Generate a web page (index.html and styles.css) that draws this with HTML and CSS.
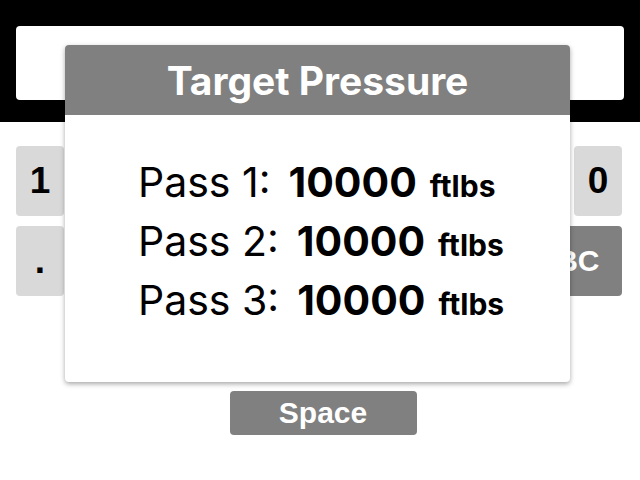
FILE: index.html
```html
<!DOCTYPE html>
<html>
<head>
<meta charset="utf-8">
<link rel="stylesheet" href="styles.css">
</head>
<body>
<div class="screen">
  <div class="topbar">
    <div class="input"></div>
  </div>
  <div class="keyboard">
    <div class="row">
      <div class="key">1</div>
      <div class="spacer"></div>
      <div class="key">0</div>
    </div>
    <div class="row">
      <div class="key">.</div>
      <div class="spacer"></div>
      <div class="key key-dark key-wide">ABC</div>
    </div>
    <div class="row row-center">
      <div class="space">Space</div>
    </div>
  </div>
  <div class="modal">
    <div class="modal-head">Target Pressure</div>
    <div class="modal-body">
      <div class="line"><span class="lbl">Pass 1:</span><span class="val">10000</span><span class="unit">ftlbs</span></div>
      <div class="line"><span class="lbl">Pass 2:</span><span class="val">10000</span><span class="unit">ftlbs</span></div>
      <div class="line"><span class="lbl">Pass 3:</span><span class="val">10000</span><span class="unit">ftlbs</span></div>
    </div>
  </div>
</div>
</body>
</html>
```
FILE: styles.css
```css
html, body {
  margin: 0;
  padding: 0;
  background: #ffffff;
}
.screen {
  position: relative;
  width: 640px;
  height: 480px;
  overflow: hidden;
  font-family: Inter, "Liberation Sans", sans-serif;
}
.topbar {
  background: #000000;
  height: 122px;
  padding: 26px 16px 0;
  box-sizing: border-box;
}
.input {
  background: #ffffff;
  height: 74px;
  border-radius: 4px;
}
.keyboard {
  padding: 24px 18px 0 16px;
  display: flex;
  flex-direction: column;
  gap: 10px;
}
.row {
  display: flex;
  gap: 14px;
  height: 70px;
}
.row-center {
  justify-content: center;
  height: auto;
  margin-top: 85px;
  padding-left: 8px;
}
.spacer {
  flex: 1;
}
.key {
  width: 48px;
  height: 70px;
  background: #d9d9d9;
  border-radius: 4px;
  display: flex;
  align-items: center;
  justify-content: center;
  font-family: "Liberation Sans", Arial, sans-serif;
  font-weight: bold;
  font-size: 37px;
  color: #000000;
}
.key-dark {
  background: #808080;
  color: #ffffff;
  font-size: 30px;
}
.key-wide {
  width: 110px;
}
.space {
  width: 187px;
  height: 44px;
  background: #808080;
  border-radius: 4px;
  color: #ffffff;
  font-family: "Liberation Sans", Arial, sans-serif;
  font-weight: bold;
  font-size: 30px;
  display: flex;
  align-items: center;
  justify-content: center;
}
.modal {
  position: absolute;
  left: 65px;
  top: 45px;
  width: 505px;
  height: 337px;
  background: #ffffff;
  border-radius: 4px;
  box-shadow: 0 2px 5px rgba(0, 0, 0, 0.35);
  overflow: hidden;
}
.modal-head {
  height: 70px;
  background: #808080;
  color: #ffffff;
  font-weight: bold;
  font-size: 39px;
  display: flex;
  align-items: center;
  justify-content: center;
}
.modal-body {
  padding: 38px 0 0 73px;
}
.line {
  height: 59px;
  line-height: 59px;
  font-size: 41px;
  color: #000000;
  white-space: nowrap;
}
.lbl {
  font-weight: normal;
}
.val {
  font-weight: bold;
  font-size: 41px;
  margin-left: 18px;
}
.unit {
  font-weight: bold;
  font-size: 30px;
  margin-left: 13px;
}
```
